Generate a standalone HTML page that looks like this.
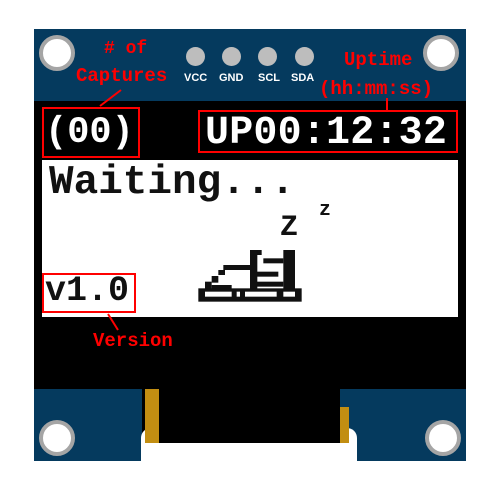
<!DOCTYPE html>
<html><head><meta charset="utf-8"><style>
html,body{margin:0;padding:0;width:500px;height:500px;background:#fff;overflow:hidden;position:relative}
div{position:absolute;box-sizing:border-box}
.mono{font-family:"Liberation Mono",monospace;font-weight:bold;white-space:nowrap;line-height:1}
.red{color:#f00}
.hole{width:36px;height:36px;border-radius:50%;background:#fff;border:4px solid #a5a5a5}
.pin{width:19px;height:19px;border-radius:50%;background:#bdbdbd}
.lbl{font-family:"Liberation Sans",sans-serif;font-weight:bold;color:#fff;font-size:11px;top:72px}
.box{border:2px solid #f00}
</style></head><body>
<div style="left:34px;top:29px;width:432px;height:73px;background:#053a5e"></div>
<div style="left:34px;top:101px;width:432px;height:289px;background:#000"></div>
<div style="left:34px;top:389px;width:108px;height:72px;background:#053a5e"></div>
<div style="left:340px;top:389px;width:126px;height:72px;background:#053a5e"></div>
<div style="left:142px;top:389px;width:198px;height:54px;background:#000"></div>
<div style="left:141px;top:443px;width:216px;height:40px;background:#fff"></div>
<div style="left:141px;top:428px;width:14px;height:30px;background:#fff;border-radius:10px 0 0 0"></div>
<div style="left:343px;top:428px;width:14px;height:30px;background:#fff;border-radius:0 10px 0 0"></div>
<div style="left:145px;top:389px;width:14px;height:54px;background:#c28e12"></div>
<div style="left:340px;top:407px;width:9px;height:36px;background:#c28e12"></div>
<div class="hole" style="left:39px;top:35px"></div>
<div class="hole" style="left:423px;top:35px"></div>
<div class="hole" style="left:39px;top:420px"></div>
<div class="hole" style="left:425px;top:420px"></div>
<div class="pin" style="left:186px;top:47px"></div>
<div class="pin" style="left:222px;top:47px"></div>
<div class="pin" style="left:258px;top:47px"></div>
<div class="pin" style="left:295px;top:47px"></div>
<div class="lbl" style="left:184px">VCC</div>
<div class="lbl" style="left:219px">GND</div>
<div class="lbl" style="left:258px">SCL</div>
<div class="lbl" style="left:291px">SDA</div>
<div style="left:42px;top:160px;width:416px;height:157px;background:#fff"></div>
<div class="mono" style="left:45px;top:115px;font-size:37px;color:#fff">(00)</div>
<div class="mono" style="left:205px;top:114px;font-size:40px;color:#fff;letter-spacing:0.2px">UP00:12:32</div>
<div class="mono" style="left:49px;top:163px;font-size:41px;color:#111">Waiting...</div>
<div class="mono" style="left:45px;top:274px;font-size:35px;color:#111">v1.0</div>
<div class="mono" style="left:280px;top:213px;font-size:30px;color:#111">Z</div>
<div class="mono" style="left:319px;top:201px;font-size:20px;color:#111">z</div>
<svg style="position:absolute;left:190px;top:200px" width="150" height="110" viewBox="0 0 450 330">
<g fill="#111">
<rect x="180" y="150" width="35" height="15"/><rect x="180" y="150" width="22" height="130"/>
<rect x="280" y="150" width="35" height="130"/>
<rect x="220" y="175" width="60" height="15"/>
<rect x="200" y="215" width="65" height="15"/>
<rect x="200" y="245" width="80" height="15"/>
<rect x="100" y="195" width="100" height="15"/>
<rect x="85" y="210" width="20" height="15"/><rect x="65" y="228" width="20" height="20"/><rect x="45" y="245" width="20" height="25"/>
<rect x="65" y="255" width="60" height="15"/>
<rect x="25" y="265" width="310" height="40"/>
</g>
<g fill="#fff">
<rect x="45" y="275" width="80" height="15"/><rect x="140" y="275" width="10" height="15"/>
<rect x="165" y="275" width="95" height="15"/><rect x="280" y="275" width="35" height="15"/>
</g></svg>
<div class="mono red" style="left:104px;top:40px;font-size:18px">#&nbsp;of</div>
<div class="mono red" style="left:76px;top:67px;font-size:19px">Captures</div>
<div class="mono red" style="left:344px;top:51px;font-size:19px">Uptime</div>
<div class="mono red" style="left:319px;top:80px;font-size:19px">(hh:mm:ss)</div>
<div class="mono red" style="left:93px;top:332px;font-size:19px">Version</div>
<div class="box" style="left:42px;top:107px;width:98px;height:51px"></div>
<div class="box" style="left:198px;top:110px;width:260px;height:43px"></div>
<div class="box" style="left:42px;top:273px;width:94px;height:40px"></div>
<svg style="position:absolute;left:0;top:0" width="500" height="500">
<g stroke="#f00" stroke-width="2"><line x1="100" y1="106" x2="121" y2="90"/><line x1="387" y1="98" x2="387" y2="110"/><line x1="108" y1="314" x2="118" y2="330"/></g></svg>
</body></html>
